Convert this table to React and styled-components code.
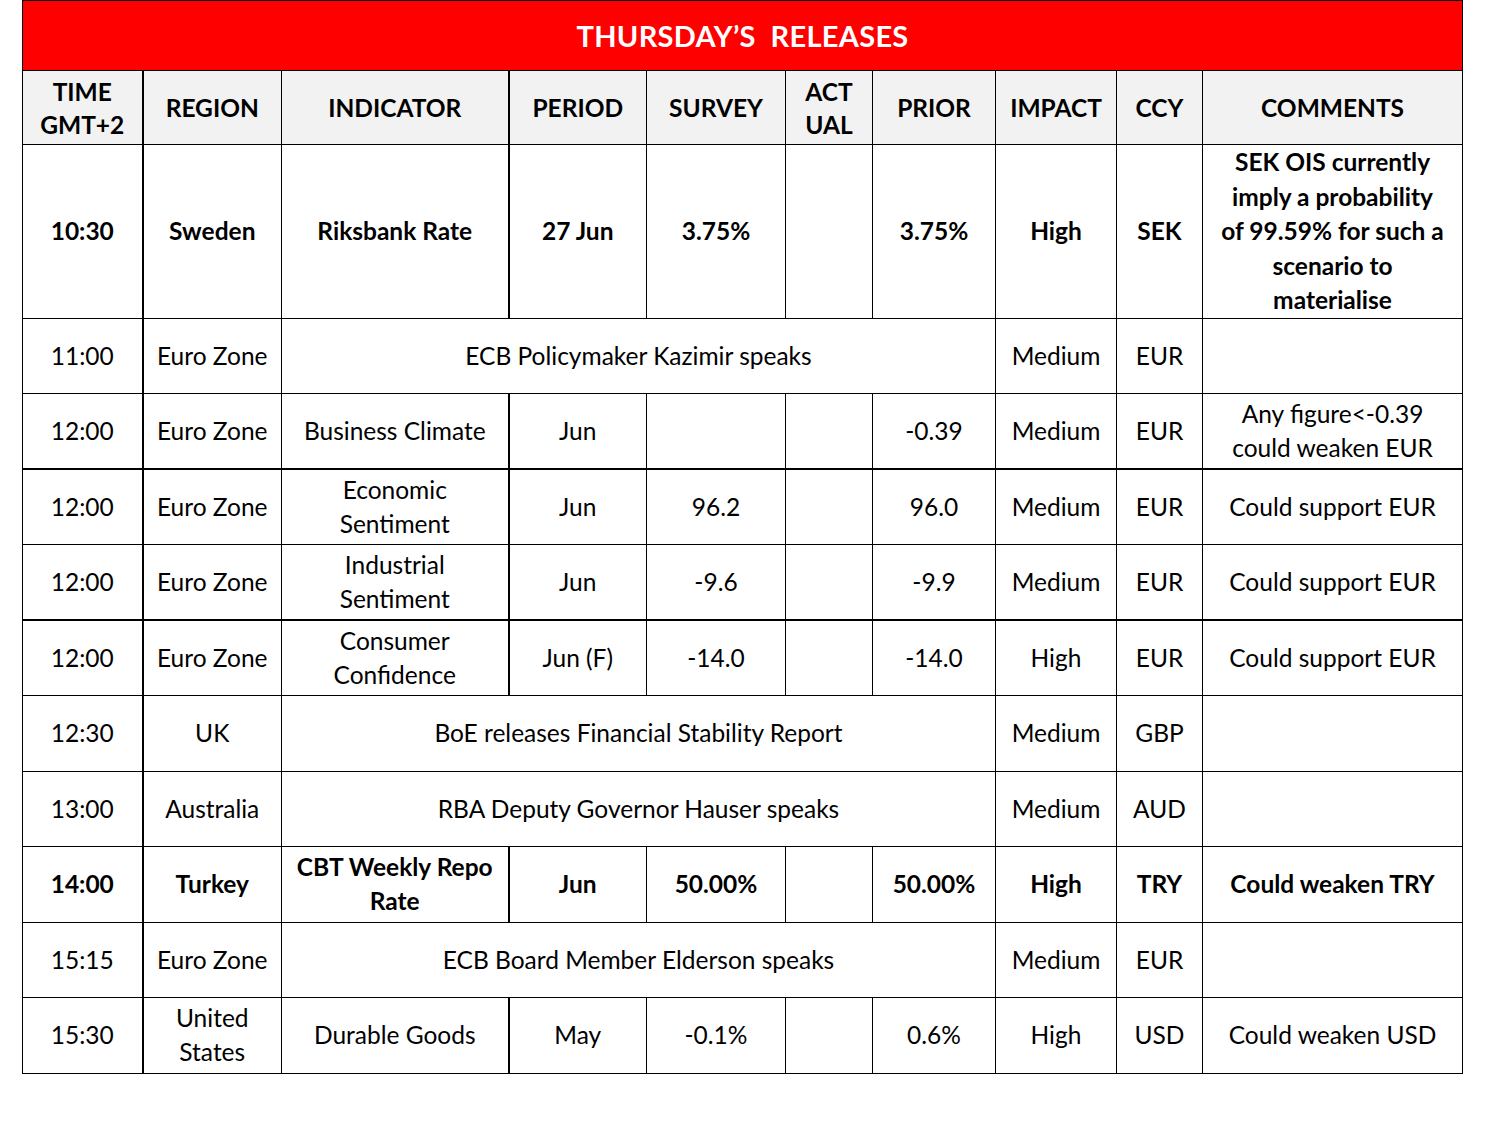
import React from "react";
import styled, { createGlobalStyle } from "styled-components";

const GlobalStyle = createGlobalStyle`
  body {
    margin: 0;
    background: #ffffff;
    font-family: Lato, "Open Sans", sans-serif;
    color: #000;
  }
`;

const Page = styled.div`
  padding: 0 0 0 22px;
`;

const Table = styled.table`
  border-collapse: collapse;
  table-layout: fixed;
  width: 1440px;
  font-size: 24.5px;
`;

const TitleCell = styled.th`
  background: #ff0000;
  color: #ffffff;
  height: 67px;
  font-size: 29px;
  font-weight: 700;
  letter-spacing: 0.3px;
  border: 1px solid #000;
  white-space: pre;
`;

const HeadCell = styled.th`
  background: #f2f2f2;
  height: 73px;
  font-weight: 700;
  line-height: 33px;
  border: 1px solid #000;
  border-left-width: ${({ $thick }) => ($thick ? "2px" : "1px")};
  padding: 0 4px;
  white-space: pre-line;
`;

const Row = styled.tr`
  height: ${({ $tall }) => ($tall ? "173px" : "75.5px")};
  font-weight: ${({ $bold }) => ($bold ? 700 : 400)};
  border-bottom: ${({ $thick }) => ($thick ? "2px" : "1px")} solid #000;
`;

const Cell = styled.td`
  text-align: center;
  vertical-align: middle;
  line-height: 34.5px;
  border-left: ${({ $thick }) => ($thick ? "2px" : "1px")} solid #000;
  border-right: 1px solid #000;
  padding: 0 4px;
  white-space: pre-line;
`;

const widths = [120, 139, 227, 138, 139, 87, 123, 121, 86, 260];

const headers = [
  "TIME\nGMT+2",
  "REGION",
  "INDICATOR",
  "PERIOD",
  "SURVEY",
  "ACT\nUAL",
  "PRIOR",
  "IMPACT",
  "CCY",
  "COMMENTS",
];

const rows = [
  {
    time: "10:30", region: "Sweden", indicator: "Riksbank Rate", period: "27 Jun",
    survey: "3.75%", prior: "3.75%", impact: "High", ccy: "SEK",
    comment: "SEK OIS currently\nimply a probability\nof 99.59% for such a\nscenario to\nmaterialise",
    bold: true, tall: true,
  },
  { time: "11:00", region: "Euro Zone", speech: "ECB Policymaker Kazimir speaks", impact: "Medium", ccy: "EUR" },
  {
    time: "12:00", region: "Euro Zone", indicator: "Business Climate", period: "Jun",
    prior: "-0.39", impact: "Medium", ccy: "EUR", comment: "Any figure<-0.39\ncould weaken EUR", thick: true,
  },
  {
    time: "12:00", region: "Euro Zone", indicator: "Economic\nSentiment", period: "Jun",
    survey: "96.2", prior: "96.0", impact: "Medium", ccy: "EUR", comment: "Could support EUR",
  },
  {
    time: "12:00", region: "Euro Zone", indicator: "Industrial\nSentiment", period: "Jun",
    survey: "-9.6", prior: "-9.9", impact: "Medium", ccy: "EUR", comment: "Could support EUR", thick: true,
  },
  {
    time: "12:00", region: "Euro Zone", indicator: "Consumer\nConfidence", period: "Jun (F)",
    survey: "-14.0", prior: "-14.0", impact: "High", ccy: "EUR", comment: "Could support EUR",
  },
  { time: "12:30", region: "UK", speech: "BoE releases Financial Stability Report", impact: "Medium", ccy: "GBP" },
  { time: "13:00", region: "Australia", speech: "RBA Deputy Governor Hauser speaks", impact: "Medium", ccy: "AUD" },
  {
    time: "14:00", region: "Turkey", indicator: "CBT Weekly Repo\nRate", period: "Jun",
    survey: "50.00%", prior: "50.00%", impact: "High", ccy: "TRY", comment: "Could weaken TRY", bold: true,
  },
  { time: "15:15", region: "Euro Zone", speech: "ECB Board Member Elderson speaks", impact: "Medium", ccy: "EUR" },
  {
    time: "15:30", region: "United\nStates", indicator: "Durable Goods", period: "May",
    survey: "-0.1%", prior: "0.6%", impact: "High", ccy: "USD", comment: "Could weaken USD",
  },
];

const App = () => (
  <Page>
    <GlobalStyle />
    <Table>
      <colgroup>
        {widths.map((w, i) => (
          <col key={i} style={{ width: w }} />
        ))}
      </colgroup>
      <thead>
        <tr>
          <TitleCell colSpan={10}>{"THURSDAY’S  RELEASES"}</TitleCell>
        </tr>
        <tr>
          {headers.map((h, i) => (
            <HeadCell key={h} $thick={i === 1 || i === 3}>
              {h}
            </HeadCell>
          ))}
        </tr>
      </thead>
      <tbody>
        {rows.map((r, i) => (
          <Row key={i} $bold={r.bold} $tall={r.tall} $thick={r.thick}>
            <Cell>{r.time}</Cell>
            <Cell $thick>{r.region}</Cell>
            {r.speech ? (
              <Cell colSpan={5}>{r.speech}</Cell>
            ) : (
              <>
                <Cell>{r.indicator}</Cell>
                <Cell $thick>{r.period}</Cell>
                <Cell>{r.survey}</Cell>
                <Cell />
                <Cell>{r.prior}</Cell>
              </>
            )}
            <Cell>{r.impact}</Cell>
            <Cell>{r.ccy}</Cell>
            <Cell>{r.comment}</Cell>
          </Row>
        ))}
      </tbody>
    </Table>
  </Page>
);

export default App;
